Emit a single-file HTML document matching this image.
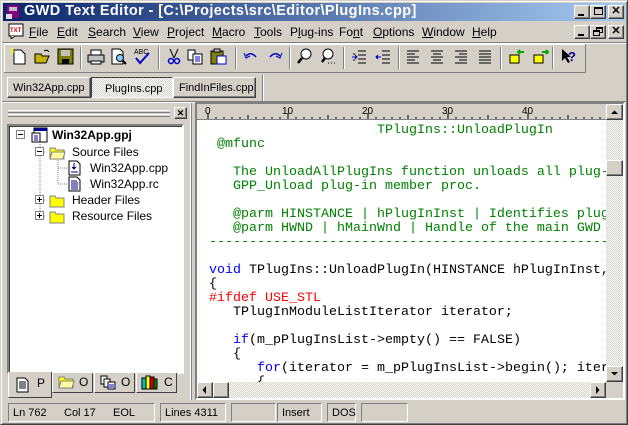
<!DOCTYPE html>
<html><head><meta charset="utf-8"><style>
*{margin:0;padding:0;box-sizing:border-box}
body{width:628px;height:425px;background:#d4d0c8;font-family:"Liberation Sans",sans-serif;font-size:11px;color:#000;position:relative;overflow:hidden}
.a{position:absolute}
.sunk2{border:2px solid;border-color:#808080 #fff #fff #808080;box-shadow:inset 1px 1px #404040}
.btn{background:#d4d0c8;border:1px solid;border-color:#fff #404040 #404040 #fff;box-shadow:inset -1px -1px #808080}
.menu span{position:absolute;top:3px}
.sep{position:absolute;width:2px;height:22px;border-left:1px solid #808080;border-right:1px solid #fff;top:47px}
.code{font-family:"Liberation Mono",monospace;font-size:13.33px;white-space:pre;line-height:14px}
.g{color:#008000}.b{color:#0000ff}.r{color:#ff0000}
.dith{background:repeating-conic-gradient(#fff 0 25%,#d4d0c8 0 50%) 0 0/2px 2px}
.st{position:absolute;top:403px;height:19px;border:1px solid;border-color:#808080 #fff #fff #808080;padding:3px 4px;font-size:11px}
.tab{position:absolute;height:20px;top:373px;background:#d4d0c8;border:1px solid;border-color:#fff #404040 #404040 #fff;font-size:12px}
</style></head><body>
<div class="a" style="left:0;top:0;width:628px;height:425px;border:1px solid;border-color:#d4d0c8 #404040 #404040 #d4d0c8;box-shadow:inset 1px 1px #fff,inset -1px -1px #808080"></div>
<div class="a" style="left:3px;top:3px;width:622px;height:18px;background:linear-gradient(90deg,#0a246a,#a6caf0)"></div>
<svg class="a" style="left:5px;top:4px" width="16" height="16"><rect x="2" y="1" width="12" height="13" fill="#800080"/><rect x="4" y="3" width="8" height="4" fill="#c0c0c0"/><rect x="1" y="10" width="6" height="5" fill="#e0e0e0"/></svg>
<div class="a" style="left:24px;top:3px;color:#fff;font-weight:bold;font-size:14.5px;letter-spacing:0.4px;white-space:nowrap">GWD Text Editor - [C:\Projects\src\Editor\PlugIns.cpp]</div>
<div class="a btn" style="left:574px;top:5px;width:16px;height:14px"><div class="a" style="left:3px;top:8px;width:6px;height:2px;background:#000"></div></div>
<div class="a btn" style="left:590px;top:5px;width:16px;height:14px"><div class="a" style="left:3px;top:1px;width:9px;height:8px;border:1px solid #000;border-top-width:2px"></div></div>
<div class="a btn" style="left:608px;top:5px;width:16px;height:14px;font-size:11px;font-weight:bold;text-align:center;line-height:11px">✕</div>
<svg class="a" style="left:8px;top:23px" width="16" height="16"><rect x="1" y="1" width="14" height="12" fill="#fff" stroke="#000"/><text x="2" y="9" font-size="6" fill="#c00" font-family="Liberation Sans" font-weight="bold">TXT</text><path d="M3 13 L3 16 L7 13" fill="#fff" stroke="#000"/></svg>
<div class="a menu" style="left:0;top:22px;width:628px;height:20px;font-size:12px">
<span style="left:29px"><u>F</u>ile</span><span style="left:57px"><u>E</u>dit</span><span style="left:88px"><u>S</u>earch</span><span style="left:133px"><u>V</u>iew</span><span style="left:167px"><u>P</u>roject</span><span style="left:212px"><u>M</u>acro</span><span style="left:254px"><u>T</u>ools</span><span style="left:290px">P<u>l</u>ug-ins</span><span style="left:339px">Fo<u>n</u>t</span><span style="left:373px"><u>O</u>ptions</span><span style="left:422px"><u>W</u>indow</span><span style="left:472px"><u>H</u>elp</span>
</div>
<div class="a btn" style="left:574px;top:25px;width:16px;height:14px"><div class="a" style="left:3px;top:8px;width:6px;height:2px;background:#000"></div></div>
<div class="a btn" style="left:590px;top:25px;width:16px;height:14px"><div class="a" style="left:5px;top:1px;width:7px;height:6px;border:1px solid #000;border-top-width:2px"></div><div class="a" style="left:2px;top:4px;width:7px;height:6px;border:1px solid #000;border-top-width:2px;background:#d4d0c8"></div></div>
<div class="a btn" style="left:608px;top:25px;width:16px;height:14px;font-size:11px;font-weight:bold;text-align:center;line-height:11px">✕</div>
<div class="a" style="left:2px;top:42px;width:624px;height:2px;border-top:1px solid #808080;border-bottom:1px solid #fff"></div>
<div class="a" style="left:4px;top:44px;width:582px;height:29px;border-right:1px solid #808080;border-bottom:1px solid #808080;box-shadow:inset 1px 1px #fff"></div>
<svg class="a" style="left:0;top:0" width="628" height="75">
<g transform="translate(10,48)"><path d="M4 2h7l4 4v10H4z" fill="#fff" stroke="#000"/><path d="M1 1l3 3M0 5h3M3 0v3" stroke="#ff0"/></g>
<g transform="translate(34,48)"><path d="M1 6h6l1 2h7l-3 7H1z" fill="#c8b400" stroke="#000"/><path d="M10 3q3-2 5 1" stroke="#000" fill="none"/></g>
<g transform="translate(57,48)"><rect x="1" y="1" width="15" height="15" fill="#808000" stroke="#000"/><rect x="4" y="2" width="9" height="6" fill="#c0c0c0"/><rect x="5" y="11" width="7" height="5" fill="#000"/></g>
<g transform="translate(87,49)"><rect x="1" y="6" width="16" height="7" fill="#c0c0c0" stroke="#000"/><rect x="4" y="1" width="10" height="5" fill="#fff" stroke="#000"/><rect x="4" y="12" width="10" height="3" fill="#fff" stroke="#000"/></g>
<g transform="translate(110,48)"><path d="M2 1h8l3 3v12H2z" fill="#fff" stroke="#000"/><circle cx="10" cy="10" r="3.5" fill="#8cf" stroke="#000"/><path d="M12 12l4 4" stroke="#000" stroke-width="2"/></g>
<g transform="translate(134,48)"><text x="0" y="6" font-size="7" font-family="Liberation Sans">ABC</text><path d="M2 10l4 5 9-10" stroke="#00c" stroke-width="2" fill="none"/></g>
<g transform="translate(166,48)"><path d="M4 1l4 9M12 1l-4 9" stroke="#000"/><circle cx="5" cy="13" r="2.5" fill="none" stroke="#00c" stroke-width="1.5"/><circle cx="11" cy="13" r="2.5" fill="none" stroke="#00c" stroke-width="1.5"/></g>
<g transform="translate(187,48)"><path d="M1 2h7v10H1z" fill="#fff" stroke="#000"/><path d="M6 6h9v10H6z" fill="#fff" stroke="#000"/><path d="M8 9h5M8 11h5M8 13h5" stroke="#00c"/></g>
<g transform="translate(210,48)"><rect x="1" y="3" width="12" height="13" fill="#808000" stroke="#000"/><rect x="4" y="1" width="6" height="3" fill="#c0c0c0" stroke="#000"/><rect x="7" y="8" width="9" height="8" fill="#fff" stroke="#00c"/></g>
<g transform="translate(243,50)"><path d="M3 6q5-5 10 1" stroke="#00c" stroke-width="1.5" fill="none"/><path d="M1 3l2 5 4-2" stroke="#00c" fill="none"/></g>
<g transform="translate(267,50)"><path d="M13 6q-5-5-10 1" stroke="#00c" stroke-width="1.5" fill="none"/><path d="M15 3l-2 5-4-2" stroke="#00c" fill="none"/></g>
<g transform="translate(297,48)"><circle cx="9" cy="6" r="5" fill="#fff" stroke="#000"/><path d="M5 10l-4 5" stroke="#000" stroke-width="2.5"/></g>
<g transform="translate(320,48)"><circle cx="8" cy="6" r="5" fill="#fff" stroke="#000"/><path d="M5 10l-3 4" stroke="#000" stroke-width="2.5"/><path d="M8 15h1M11 15h1M14 15h1" stroke="#000"/></g>
<g transform="translate(351,49)" stroke="#000"><path d="M7 2h8M7 6h8M7 10h8M7 14h8M3 4v2M3 10v2"/><path d="M1 8h5M4 6l2 2-2 2" stroke="#00c"/></g>
<g transform="translate(375,49)" stroke="#000"><path d="M7 2h8M7 6h8M7 10h8M7 14h8"/><path d="M1 8h5M3 6l-2 2 2 2" stroke="#00c"/></g>
<g transform="translate(406,49)" stroke="#000"><path d="M1 2h12M1 5h8M1 8h12M1 11h8M1 14h12"/></g>
<g transform="translate(430,49)" stroke="#000"><path d="M1 2h12M3 5h8M1 8h12M3 11h8M1 14h12"/></g>
<g transform="translate(454,49)" stroke="#000"><path d="M1 2h12M5 5h8M1 8h12M5 11h8M1 14h12"/></g>
<g transform="translate(478,49)" stroke="#000"><path d="M1 2h12M1 5h12M1 8h12M1 11h12M1 14h12"/></g>
<g transform="translate(509,48)"><rect x="1" y="7" width="9" height="8" fill="#ff0" stroke="#000"/><path d="M9 4h6M11 2l-2 2 2 2" stroke="#0a0" stroke-width="2" fill="none"/></g>
<g transform="translate(533,48)"><rect x="1" y="7" width="9" height="8" fill="#ff0" stroke="#000"/><path d="M9 4h6M13 2l2 2-2 2" stroke="#0a0" stroke-width="2" fill="none"/></g>
<g transform="translate(560,48)"><path d="M2 1v12l3-3 3 5 2-1-3-5h4z" fill="#000"/><text x="8" y="13" font-size="13" font-weight="bold" fill="#00008b" font-family="Liberation Sans">?</text></g>
</svg>
<div class="sep" style="left:80px"></div><div class="sep" style="left:158px"></div><div class="sep" style="left:235px"></div><div class="sep" style="left:289px"></div><div class="sep" style="left:343px"></div><div class="sep" style="left:398px"></div><div class="sep" style="left:500px"></div><div class="sep" style="left:552px"></div>
<div class="a" style="left:262px;top:75px;width:2px;height:26px;border-left:1px solid #808080;border-right:1px solid #fff"></div>
<div class="a btn" style="left:7px;top:77px;width:84px;height:21px;font-size:11px;padding:4px 0 0 5px;white-space:nowrap">Win32App.cpp</div>
<div class="a dith" style="left:91px;top:77px;width:82px;height:21px;border:1px solid;border-color:#404040 #fff #fff #404040;font-size:11px;padding:5px 0 0 13px;white-space:nowrap">PlugIns.cpp</div>
<div class="a btn" style="left:173px;top:77px;width:83px;height:21px;font-size:11px;padding:4px 0 0 5px;white-space:nowrap">FindInFiles.cpp</div>
<div class="a" style="left:2px;top:101px;width:624px;height:2px;border-top:1px solid #808080;border-bottom:1px solid #fff"></div>
<div class="a" style="left:8px;top:110px;width:162px;height:3px;border-top:1px solid #fff;border-bottom:1px solid #808080"></div>
<div class="a" style="left:8px;top:114px;width:162px;height:3px;border-top:1px solid #fff;border-bottom:1px solid #808080"></div>
<div class="a btn" style="left:174px;top:107px;width:13px;height:12px;font-size:9px;font-weight:bold;text-align:center;line-height:10px">✕</div>
<div class="a" style="left:190px;top:103px;width:2px;height:297px;border-left:1px solid #fff;border-right:1px solid #808080"></div>
<div class="a sunk2" style="left:7px;top:124px;width:177px;height:250px;background:#fff"></div>
<svg class="a" style="left:9px;top:126px" width="172" height="110">
<g stroke="#808080" stroke-dasharray="1 1" fill="none"><path d="M31 18V91M31 26h6M31 74h6M31 90h6M49 34V58M49 42h10M49 58h10"/></g>
<g fill="#fff" stroke="#808080"><rect x="7.5" y="4.5" width="8" height="8"/><rect x="26.5" y="21.5" width="8" height="8"/><rect x="26.5" y="69.5" width="8" height="8"/><rect x="26.5" y="85.5" width="8" height="8"/></g>
<path d="M9 8.5h5M28 25.5h5M28 73.5h5M30.5 71v5M28 89.5h5M30.5 87v5" stroke="#000"/>
<g transform="translate(22,1)"><rect x="3" y="1" width="13" height="14" fill="#fff" stroke="#000"/><rect x="3" y="1" width="13" height="3" fill="#00008b"/><rect x="1" y="6" width="8" height="9" fill="#fff" stroke="#000"/><path d="M3 9h4M3 11h4M3 13h4" stroke="#00c"/></g>
<g transform="translate(40,19)"><path d="M1 3h5l1 2h8v9H1z" fill="#ff0" stroke="#808080"/><path d="M3 7h13l-2 7H1z" fill="#ffffa0" stroke="#808080"/></g>
<g transform="translate(58,34)"><path d="M2 1h8l3 3v11H2z" fill="#fff" stroke="#000"/><path d="M7 3v6M5 7l2 2 2-2M4 12h7" stroke="#00008b"/></g>
<g transform="translate(58,50)"><path d="M2 1h8l3 3v11H2z" fill="#fff" stroke="#000"/><path d="M4 5h6M4 7h7M4 9h7M4 11h7M4 13h7" stroke="#00008b"/></g>
<g transform="translate(40,67)"><path d="M1 3h5l1 2h8v9H1z" fill="#ff0" stroke="#808080"/></g>
<g transform="translate(40,83)"><path d="M1 3h5l1 2h8v9H1z" fill="#ff0" stroke="#808080"/></g>
</svg>
<div class="a" style="left:52px;top:128px;font-size:12px;font-weight:bold">Win32App.gpj</div>
<div class="a" style="left:72px;top:145px;font-size:12px">Source Files</div>
<div class="a" style="left:90px;top:161px;font-size:12px">Win32App.cpp</div>
<div class="a" style="left:90px;top:177px;font-size:12px">Win32App.rc</div>
<div class="a" style="left:72px;top:193px;font-size:12px">Header Files</div>
<div class="a" style="left:72px;top:209px;font-size:12px">Resource Files</div>
<div class="tab" style="left:52px;width:41px;padding:2px 0 0 26px;border-top:none">O</div>
<div class="tab" style="left:94px;width:41px;padding:2px 0 0 26px;border-top:none">O</div>
<div class="tab" style="left:136px;width:41px;padding:2px 0 0 27px;border-top:none">C</div>
<div class="a" style="left:8px;top:372px;width:44px;height:26px;background:#d4d0c8;border:1px solid;border-top:none;border-color:#fff #404040 #404040 #fff;font-size:12px;padding:4px 0 0 28px">P</div>
<svg class="a" style="left:10px;top:373px" width="170" height="22">
<g transform="translate(5,4)"><path d="M2 1h8l3 3v11H2z" fill="#fff" stroke="#000"/><path d="M4 5h7M4 7h7M4 9h7M4 11h7" stroke="#000"/></g>
<g transform="translate(48,1)"><path d="M1 3h5l1 2h8v9H1z" fill="#ff0" stroke="#808080"/><path d="M3 7h13l-2 7H1z" fill="#ffffa0" stroke="#808080"/></g>
<g transform="translate(90,2)"><rect x="1" y="1" width="6" height="8" fill="#fff" stroke="#000"/><rect x="4" y="4" width="6" height="8" fill="#fff" stroke="#000"/><rect x="8" y="7" width="7" height="7" fill="#fff" stroke="#000"/><path d="M9 10h5M9 12h5" stroke="#00c"/></g>
<g transform="translate(131,1)"><rect x="1" y="4" width="4" height="11" fill="#00c0c0" stroke="#000"/><rect x="5" y="2" width="4" height="13" fill="#ff0" stroke="#000"/><rect x="9" y="3" width="4" height="12" fill="#c00" stroke="#000"/><rect x="13" y="5" width="3" height="10" fill="#080" stroke="#000"/></g>
</svg>
<div class="a sunk2" style="left:195px;top:102px;width:430px;height:298px"></div>
<div class="a" style="left:197px;top:104px;width:409px;height:16px;background:#d4d0c8;border-bottom:1px solid #808080"></div>
<svg class="a" style="left:197px;top:104px" width="409" height="16">
<g stroke="#000">
<path d="M11 9v6M91 9v6M171 9v6M251 9v6M331 9v6M51 11v4M131 11v4M211 11v4M291 11v4M371 11v4"/>
<path d="M19 13v2M27 13v2M35 13v2M43 13v2M59 13v2M67 13v2M75 13v2M83 13v2M99 13v2M107 13v2M115 13v2M123 13v2M139 13v2M147 13v2M155 13v2M163 13v2M179 13v2M187 13v2M195 13v2M203 13v2M219 13v2M227 13v2M235 13v2M243 13v2M259 13v2M267 13v2M275 13v2M283 13v2M299 13v2M307 13v2M315 13v2M323 13v2M339 13v2M347 13v2M355 13v2M363 13v2M379 13v2M387 13v2M395 13v2M403 13v2"/>
</g>
<g font-size="10" font-family="Liberation Sans"><text x="8" y="10">0</text><text x="85" y="10">10</text><text x="165" y="10">20</text><text x="245" y="10">30</text><text x="325" y="10">40</text></g>
</svg>
<div class="a" style="left:197px;top:120px;width:409px;height:262px;background:#fff;overflow:hidden">
<div class="code a" style="left:12px;top:4px"><span class="g">                     TPlugIns::UnloadPlugIn
 @mfunc

   The UnloadAllPlugIns function unloads all plug-ins
   GPP_Unload plug-in member proc.

   @parm HINSTANCE | hPlugInInst | Identifies plug-in
   @parm HWND | hMainWnd | Handle of the main GWD window
-------------------------------------------------------</span>

<span class="b">void</span> TPlugIns::UnloadPlugIn(HINSTANCE hPlugInInst, HWND
{
<span class="r">#ifdef USE_STL</span>
   TPlugInModuleListIterator iterator;

   <span class="b">if</span>(m_pPlugInsList-&gt;empty() == FALSE)
   {
      <span class="b">for</span>(iterator = m_pPlugInsList-&gt;begin(); iterator
      {</div>
</div>
<div class="a dith" style="left:606px;top:104px;width:17px;height:278px"></div>
<div class="a btn" style="left:606px;top:104px;width:17px;height:16px"><svg width="15" height="14"><path d="M4 9h7L7.5 5.5z" fill="#000"/></svg></div>
<div class="a btn" style="left:606px;top:160px;width:17px;height:16px"></div>
<div class="a btn" style="left:606px;top:366px;width:17px;height:16px"><svg width="15" height="14"><path d="M4 5h7L7.5 8.5z" fill="#000"/></svg></div>
<div class="a dith" style="left:197px;top:382px;width:409px;height:16px"></div>
<div class="a btn" style="left:197px;top:382px;width:16px;height:16px"><svg width="14" height="14"><path d="M8 3v8L4.5 7z" fill="#000"/></svg></div>
<div class="a btn" style="left:213px;top:382px;width:16px;height:16px"></div>
<div class="a btn" style="left:590px;top:382px;width:16px;height:16px"><svg width="14" height="14"><path d="M5 3v8L8.5 7z" fill="#000"/></svg></div>
<div class="a" style="left:606px;top:382px;width:17px;height:16px;background:#d4d0c8"></div>
<div class="st" style="left:8px;width:147px">Ln 762<span style="position:absolute;left:55px">Col 17</span><span style="position:absolute;left:104px">EOL</span></div>
<div class="st" style="left:160px;width:66px">Lines 4311</div>
<div class="st" style="left:231px;width:45px"></div>
<div class="st" style="left:277px;width:45px">Insert</div>
<div class="st" style="left:327px;width:29px">DOS</div>
<div class="st" style="left:361px;width:47px"></div>
</body></html>
